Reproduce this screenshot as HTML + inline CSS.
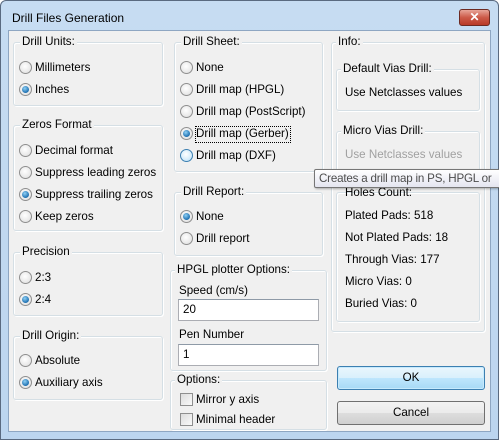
<!DOCTYPE html>
<html><head><style>
*{margin:0;padding:0;box-sizing:border-box}
body{width:499px;height:440px;overflow:hidden;background:#fff;font-family:"Liberation Sans",sans-serif;font-size:11.6px;color:#000;position:relative}
.frame{position:absolute;left:0;top:0;width:499px;height:440px;background:linear-gradient(#c6dcf2,#bcd5ef);border:1px solid #5a6a80;border-radius:6px 6px 0 0}
.client{position:absolute;left:8px;top:30px;width:483px;height:402px;background:#f0f0f0;border:1px solid #8ea6c2}
.title{position:absolute;left:12px;top:11px;font-size:12px}
.close{position:absolute;left:459px;top:9px;width:31px;height:17px;border:1px solid #6d2a22;border-radius:3px;background:linear-gradient(#e8a598,#cc5a48 50%,#b83a28);color:#fff;font-weight:bold;text-align:center;line-height:15px;font-size:12px}
.g{position:absolute;border:1px solid #d5dfe5;border-radius:3px;box-shadow:inset 1px 1px 0 #fff,1px 1px 0 #fff}
.gl{position:absolute;background:#f0f0f0;padding:0 2px;top:-8px;left:6px;line-height:14px}
.t{position:absolute;white-space:nowrap;line-height:14px}
.r{position:absolute;width:13px;height:13px;border-radius:50%;border:1px solid #8f8f8f;background:radial-gradient(circle at 45% 40%,#fff,#dcdcdc)}
.r.on::after{content:"";position:absolute;left:2px;top:2px;width:7px;height:7px;border-radius:50%;background:radial-gradient(circle at 40% 35%,#8fd0f5,#1d6fb0 70%,#0d4f86)}
.r.hv{border-color:#3c7fb1;background:radial-gradient(circle at 45% 40%,#fff,#b8e0f8)}
.cb{position:absolute;width:13px;height:13px;border:1px solid #8f8f8f;background:linear-gradient(135deg,#dcdcdc,#fafafa)}
.in{position:absolute;background:#fff;border:1px solid #abadb3;border-top-color:#8e9aa7;height:22px;padding-left:4px;line-height:20px}
.btn{position:absolute;border:1px solid #707070;border-radius:3px;text-align:center;line-height:22px;background:linear-gradient(#f2f2f2 0,#ebebeb 50%,#dddddd 51%,#cfcfcf)}
.dis{color:#a0a0a0}
</style></head><body>
<div class="frame"></div>
<div class="title">Drill Files Generation</div>
<div class="close">✕</div>
<div class="client"></div>

<div class="g" style="left:13px;top:42px;width:150px;height:64px"><span class="gl">Drill Units:</span></div>
<div class="r" style="left:19px;top:61px"></div><span class="t" style="left:35px;top:61px">Millimeters</span>
<div class="r on" style="left:19px;top:83px"></div><span class="t" style="left:35px;top:83px">Inches</span>

<div class="g" style="left:13px;top:125px;width:150px;height:106px"><span class="gl">Zeros Format</span></div>
<div class="r" style="left:19px;top:144px"></div><span class="t" style="left:35px;top:144px">Decimal format</span>
<div class="r" style="left:19px;top:166px"></div><span class="t" style="left:35px;top:166px">Suppress leading zeros</span>
<div class="r on" style="left:19px;top:188px"></div><span class="t" style="left:35px;top:188px">Suppress trailing zeros</span>
<div class="r" style="left:19px;top:210px"></div><span class="t" style="left:35px;top:210px">Keep zeros</span>

<div class="g" style="left:13px;top:252px;width:150px;height:64px"><span class="gl">Precision</span></div>
<div class="r" style="left:19px;top:271px"></div><span class="t" style="left:35px;top:271px">2:3</span>
<div class="r on" style="left:19px;top:293px"></div><span class="t" style="left:35px;top:293px">2:4</span>

<div class="g" style="left:13px;top:336px;width:150px;height:64px"><span class="gl">Drill Origin:</span></div>
<div class="r" style="left:19px;top:354px"></div><span class="t" style="left:35px;top:354px">Absolute</span>
<div class="r on" style="left:19px;top:376px"></div><span class="t" style="left:35px;top:376px">Auxiliary axis</span>

<div class="g" style="left:174px;top:42px;width:149px;height:130px"><span class="gl">Drill Sheet:</span></div>
<div class="r" style="left:180px;top:61px"></div><span class="t" style="left:196px;top:61px">None</span>
<div class="r" style="left:180px;top:83px"></div><span class="t" style="left:196px;top:83px">Drill map (HPGL)</span>
<div class="r" style="left:180px;top:105px"></div><span class="t" style="left:196px;top:105px">Drill map (PostScript)</span>
<div class="r on" style="left:180px;top:127px"></div><span class="t" style="left:195px;top:126px;border:1px dotted #000;padding:0 1px 1px 0">Drill map (Gerber)</span>
<div class="r hv" style="left:180px;top:149px"></div><span class="t" style="left:196px;top:149px">Drill map (DXF)</span>

<div class="g" style="left:174px;top:192px;width:149px;height:64px"><span class="gl">Drill Report:</span></div>
<div class="r on" style="left:180px;top:210px"></div><span class="t" style="left:196px;top:210px">None</span>
<div class="r" style="left:180px;top:232px"></div><span class="t" style="left:196px;top:232px">Drill report</span>

<div class="g" style="left:170px;top:270px;width:157px;height:101px"><span class="gl" style="left:4px">HPGL plotter Options:</span></div>
<span class="t" style="left:179px;top:284px">Speed (cm/s)</span>
<div class="in" style="left:178px;top:299px;width:141px">20</div>
<span class="t" style="left:179px;top:328px">Pen Number</span>
<div class="in" style="left:178px;top:344px;width:141px">1</div>

<div class="g" style="left:170px;top:380px;width:157px;height:50px"><span class="gl" style="left:4px">Options:</span></div>
<div class="cb" style="left:180px;top:393px"></div><span class="t" style="left:196px;top:393px">Mirror y axis</span>
<div class="cb" style="left:180px;top:413px"></div><span class="t" style="left:196px;top:413px">Minimal header</span>

<div class="g" style="left:331px;top:42px;width:154px;height:290px"><span class="gl" style="left:4px">Info:</span></div>
<div class="g" style="left:336px;top:69px;width:144px;height:42px"><span class="gl" style="left:4px">Default Vias Drill:</span></div>
<span class="t" style="left:345px;top:86px">Use Netclasses values</span>
<div class="g" style="left:336px;top:131px;width:144px;height:42px"><span class="gl" style="left:4px">Micro Vias Drill:</span></div>
<span class="t dis" style="left:345px;top:148px">Use Netclasses values</span>
<div class="g" style="left:336px;top:192px;width:144px;height:130px"></div>
<span class="t" style="left:345px;top:186px">Holes Count:</span>
<span class="t" style="left:345px;top:209px">Plated Pads: 518</span>
<span class="t" style="left:345px;top:231px">Not Plated Pads: 18</span>
<span class="t" style="left:345px;top:253px">Through Vias: 177</span>
<span class="t" style="left:345px;top:275px">Micro Vias: 0</span>
<span class="t" style="left:345px;top:297px">Buried Vias: 0</span>

<div class="btn" style="left:337px;top:366px;width:148px;height:24px;border-color:#3c7fb1;background:linear-gradient(#eaf6fd 0,#d9f0fc 50%,#bee6fd 51%,#a7d9f5);box-shadow:inset 0 0 0 1px #c6eafd">OK</div>
<div class="btn" style="left:337px;top:401px;width:148px;height:24px">Cancel</div>

<div style="position:absolute;left:314px;top:169px;width:190px;height:19px;background:linear-gradient(#fff,#e4e5f0);border:1px solid #767676;border-radius:2px;box-shadow:1px 1px 2px rgba(0,0,0,.3);padding-left:4px;line-height:17px;white-space:nowrap;color:#4c4c4c;letter-spacing:-0.2px">Creates a drill map in PS, HPGL or</div>
</body></html>
